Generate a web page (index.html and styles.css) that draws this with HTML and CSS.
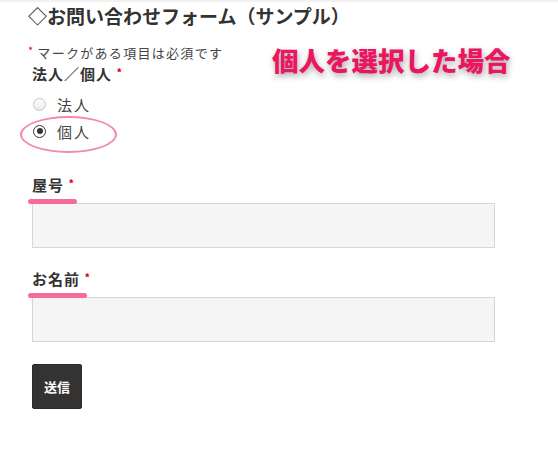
FILE: index.html
```html
<!DOCTYPE html>
<html lang="ja">
<head>
<meta charset="utf-8">
<title>お問い合わせフォーム</title>
<link rel="stylesheet" href="styles.css">
</head>
<body>
<div class="topbar"></div>
<div class="page">
  <h1 class="title">◇お問い合わせフォーム（サンプル）</h1>
  <p class="note"><span class="req">*</span> マークがある項目は必須です</p>
  <div class="field">
    <div class="label">法人／個人 <span class="req">*</span></div>
    <label class="radio-row"><span class="radio"></span><span>法人</span></label>
    <label class="radio-row"><span class="radio checked"></span><span>個人</span></label>
  </div>
  <div class="field text-field first">
    <div class="label">屋号 <span class="req">*</span></div>
    <div class="input"></div>
  </div>
  <div class="field text-field">
    <div class="label">お名前 <span class="req">*</span></div>
    <div class="input"></div>
  </div>
  <button class="submit">送信</button>
</div>

<div class="callout">個人を選択した場合</div>
<div class="ellipse"></div>
<div class="mark mark-1"></div>
<div class="mark mark-2"></div>
</body>
</html>
```

FILE: styles.css
```css
html, body {
  margin: 0;
  padding: 0;
  background: #fff;
}
body {
  position: relative;
  width: 558px;
  height: 449px;
  overflow: hidden;
  font-family: "Noto Sans CJK JP", "Noto Sans", sans-serif;
  color: #333;
}
.topbar {
  height: 2px;
  background: #f1f1f1;
}
.page {
  padding-left: 28px;
}
.title {
  margin: 0;
  font-size: 19px;
  line-height: 27px;
  font-weight: 700;
  color: #333;
}
.note {
  margin: 12px 0 0 0;
  font-size: 13px;
  line-height: 18px;
  letter-spacing: 1.3px;
  color: #444;
}
.req {
  color: #e60012;
  font-size: 11px;
  vertical-align: 3px;
  letter-spacing: 0;
}
.field {
  padding-left: 4px;
}
.label {
  margin-top: 0;
  font-size: 15px;
  line-height: 20px;
  font-weight: 700;
  letter-spacing: 1px;
  color: #333;
}
.radio-row {
  display: flex;
  align-items: center;
  gap: 11px;
  height: 24px;
  margin-left: 1px;
  font-size: 15px;
  letter-spacing: 2px;
  color: #444;
}
.radio-row:first-of-type {
  margin-top: 8px;
}
.radio-row + .radio-row {
  margin-top: 3px;
}
.radio {
  box-sizing: border-box;
  width: 13px;
  height: 13px;
  border-radius: 50%;
  border: 1px solid #c4c4c4;
  background: linear-gradient(#ffffff, #ececec);
  position: relative;
}
.radio.checked {
  border: 1.5px solid #333;
  background: #fff;
}
.radio.checked::after {
  content: "";
  position: absolute;
  left: 50%;
  top: 50%;
  width: 6px;
  height: 6px;
  margin: -3px 0 0 -3px;
  border-radius: 50%;
  background: #333;
}
.text-field.first {
  margin-top: 30px;
}
.text-field {
  margin-top: 19px;
}
.input {
  box-sizing: border-box;
  width: 463px;
  height: 45px;
  margin-top: 8px;
  background: #f5f5f5;
  border: 1px solid #d6d6d6;
}
.submit {
  display: block;
  margin: 22px 0 0 4px;
  width: 50px;
  height: 45px;
  padding: 0;
  border: 1px solid #2a2a2a;
  border-radius: 2px;
  background: #333;
  color: #fff;
  font-family: "Noto Sans CJK JP", sans-serif;
  font-size: 13px;
  font-weight: 700;
}
.callout {
  position: absolute;
  left: 272px;
  top: 45px;
  font-size: 26.5px;
  line-height: 30px;
  font-weight: 900;
  color: #eb1660;
  -webkit-text-stroke: 6px #fff;
  paint-order: stroke fill;
  text-shadow: 1px 3px 6px rgba(0, 0, 0, 0.35);
  white-space: nowrap;
}
.ellipse {
  position: absolute;
  left: 20px;
  top: 116px;
  width: 93px;
  height: 33px;
  border: 2px solid #f48aae;
  border-radius: 50%;
}
.mark {
  position: absolute;
  left: 28px;
  height: 5px;
  border-radius: 3px;
  background: #f66c99;
}
.mark-1 {
  top: 199px;
  width: 49px;
}
.mark-2 {
  top: 293px;
  width: 59px;
}
```
